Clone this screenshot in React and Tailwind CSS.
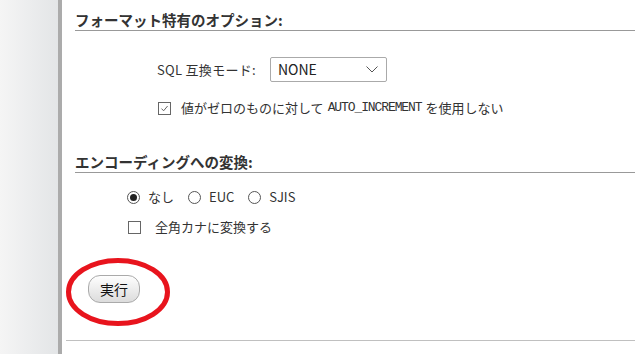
import React from 'react';

const font = { fontFamily: '"Noto Sans CJK JP", "Noto Sans", sans-serif' };

const Radio = ({ checked, label }) => (
  <label className="flex items-center">
    <span className="flex h-[13px] w-[13px] items-center justify-center rounded-full border border-[#555] bg-white">
      {checked && <span className="h-[7px] w-[7px] rounded-full bg-[#222]" />}
    </span>
    <span className="ml-[8px]">{label}</span>
  </label>
);

const Check = ({ checked }) => (
  <span className="flex h-[13px] w-[13px] items-center justify-center border border-[#666] bg-white">
    {checked && (
      <svg width="9" height="9" viewBox="0 0 9 9" fill="none">
        <path d="M1.5 4.6 L3.6 6.8 L7.6 2" stroke="#666" strokeWidth="1" />
      </svg>
    )}
  </span>
);

export default function App() {
  return (
    <div className="flex h-[354px] w-[635px] overflow-hidden bg-white text-[13px] text-[#333]" style={font}>
      <div className="w-[62px] shrink-0 border-r-4 border-[#ababab] bg-gradient-to-r from-[#f5f5f5] to-[#e3e5e7]" />
      <div className="relative flex-1 pl-[4px]">
        <div className="pl-[9px]">
          <div className="mt-[10px] flex h-[21px] items-center border-b border-[#999] text-[14.5px] font-bold leading-none text-[#333]">
            フォーマット特有のオプション:
          </div>

          <div className="mt-[26px] flex h-[25px] items-center pl-[82px]">
            <span className="tracking-[0.3px]">SQL 互換モード:</span>
            <div className="ml-[14px] flex h-[25px] w-[117px] items-center justify-between rounded-[2px] border border-[#aaa] pl-[7px] pr-[8px] text-[14px] text-[#222]">
              <span>NONE</span>
              <svg width="12" height="7" viewBox="0 0 12 7" fill="none">
                <path d="M0.5 0.5 L6 6 L11.5 0.5" stroke="#555" strokeWidth="1" />
              </svg>
            </div>
          </div>

          <div className="mt-[16px] flex h-[20px] items-center pl-[83px]">
            <Check checked />
            <span className="ml-[10px] flex items-center">
              <span>値がゼロのものに対して</span>
              <span className="mx-[4px] text-[13px] tracking-[-1.1px]" style={{ fontFamily: '"Liberation Mono", monospace' }}>
                AUTO_INCREMENT
              </span>
              <span>を使用しない</span>
            </span>
          </div>

          <div className="mt-[34px] flex h-[21px] items-center border-b border-[#999] text-[14.5px] font-bold leading-none text-[#333]">
            エンコーディングへの変換:
          </div>

          <div className="mt-[14px] flex h-[20px] items-center gap-[14px] pl-[52px]">
            <Radio checked label="なし" />
            <Radio label="EUC" />
            <Radio label="SJIS" />
          </div>

          <div className="mt-[10px] flex h-[20px] items-center pl-[53px]">
            <Check />
            <span className="ml-[14px]">全角カナに変換する</span>
          </div>

          <div className="mt-[38px] pl-[13px]">
            <button className="h-[28px] w-[52px] rounded-[12px] border border-[#aaa] bg-gradient-to-b from-[#fefefe] to-[#dcdcdc] text-[14px] text-[#111]">
              実行
            </button>
          </div>
        </div>

        <div className="mt-[37px] border-t border-[#c0c0c0]" />

        <svg className="absolute left-[3px] top-[257px]" width="106" height="70" viewBox="0 0 106 70" fill="none">
          <ellipse cx="53" cy="35" rx="49.5" ry="31.5" stroke="#e8141d" strokeWidth="5" />
        </svg>
      </div>
    </div>
  );
}
